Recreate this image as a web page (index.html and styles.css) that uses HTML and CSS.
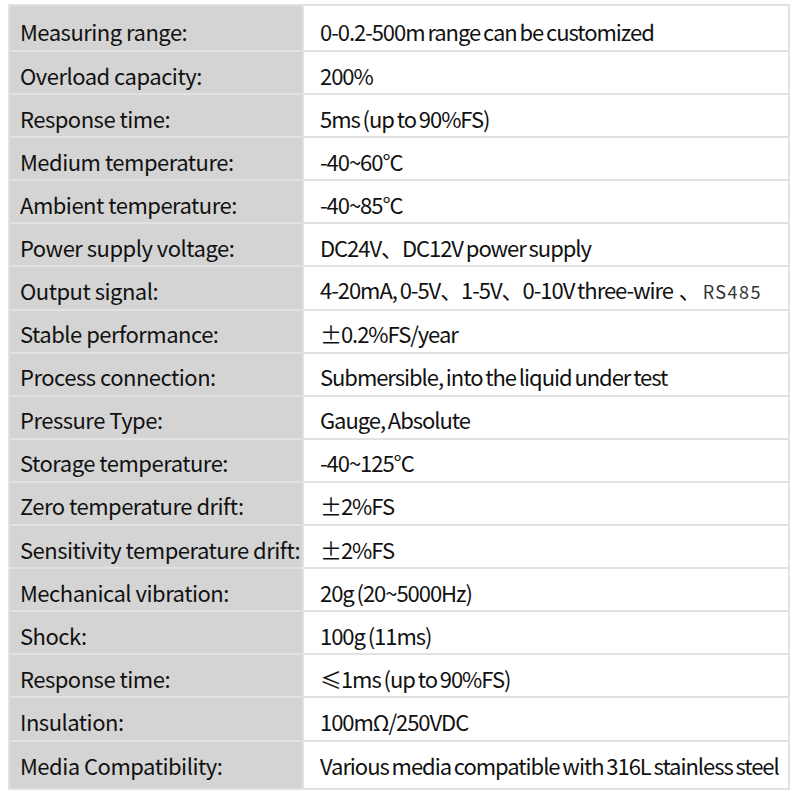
FILE: index.html
```html
<!DOCTYPE html>
<html>
<head>
<meta charset="utf-8">
<link rel="stylesheet" href="styles.css">
</head>
<body>
<table class="spec">
<tr><td class="k">Measuring range:</td><td class="v">0-0.2-500m range can be customized</td></tr>
<tr><td class="k">Overload capacity:</td><td class="v">200%</td></tr>
<tr><td class="k">Response time:</td><td class="v">5ms (up to 90%FS)</td></tr>
<tr><td class="k">Medium temperature:</td><td class="v">-40~60°C</td></tr>
<tr><td class="k">Ambient temperature:</td><td class="v">-40~85°C</td></tr>
<tr><td class="k">Power supply voltage:</td><td class="v">DC24V、DC12V power supply</td></tr>
<tr><td class="k">Output signal:</td><td class="v">4-20mA, 0-5V、1-5V、0-10V three-wire &nbsp;、<span class="rs">RS485</span></td></tr>
<tr><td class="k">Stable performance:</td><td class="v">±0.2%FS/year</td></tr>
<tr><td class="k">Process connection:</td><td class="v">Submersible, into the liquid under test</td></tr>
<tr><td class="k">Pressure Type:</td><td class="v">Gauge, Absolute</td></tr>
<tr><td class="k">Storage temperature:</td><td class="v">-40~125°C</td></tr>
<tr><td class="k">Zero temperature drift:</td><td class="v">±2%FS</td></tr>
<tr><td class="k">Sensitivity temperature drift:</td><td class="v">±2%FS</td></tr>
<tr><td class="k">Mechanical vibration:</td><td class="v">20g (20~5000Hz)</td></tr>
<tr><td class="k">Shock:</td><td class="v">100g (11ms)</td></tr>
<tr><td class="k">Response time:</td><td class="v">≤1ms (up to 90%FS)</td></tr>
<tr><td class="k">Insulation:</td><td class="v">100mΩ/250VDC</td></tr>
<tr><td class="k">Media Compatibility:</td><td class="v">Various media compatible with 316L stainless steel</td></tr>
</table>
</body>
</html>
```
FILE: styles.css
```css
html, body {
  margin: 0;
  padding: 0;
  background: #ffffff;
}
body {
  padding: 4px 10px 0 8px;
  font-family: "Noto Sans CJK SC", "Noto Sans", sans-serif;
  color: #111111;
}
.spec {
  border-collapse: collapse;
  width: 782px;
  table-layout: fixed;
  border: 2px solid #dedede;
}
.spec td {
  border: 2px solid #e2e2e2;
  height: 43.1px;
  padding: 4px 0 0 0;
  box-sizing: border-box;
  font-size: 22px;
  line-height: 28px;
  white-space: nowrap;
  vertical-align: middle;
}
.spec td.k {
  width: 294px;
  background: #d4d4d4;
  padding-left: 10px;
  letter-spacing: -0.5px;
}
.spec td.v {
  background: #ffffff;
  padding-left: 16px;
  letter-spacing: -1.05px;
  word-spacing: -1px;
}
.spec tr:first-child td { height: 46px; padding-top: 6px; }
.spec tr:last-child td { height: 48px; padding-top: 0; }
.rs {
  font-family: "Noto Sans CJK SC", sans-serif;
  font-size: 18px;
  color: #333333;
  letter-spacing: 1.5px;
  margin-left: 3px;
}
```
